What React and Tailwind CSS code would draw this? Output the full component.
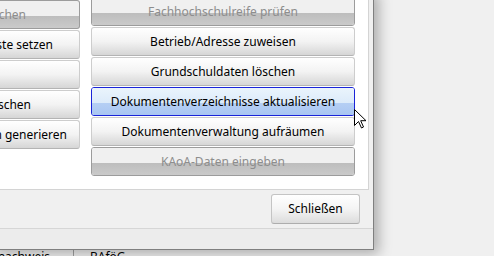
import React from "react";

const leftButtons = [
  { label: "chen", pad: "pr-[53px]", disabled: true },
  { label: "ste setzen", pad: "pr-[26px]" },
  { label: "", pad: "pr-[20px]" },
  { label: "schen", pad: "pr-[48px]" },
  { label: "n generieren", pad: "pr-[12px]" },
];

const rightButtons = [
  { label: "Fachhochschulreife prüfen", disabled: true },
  { label: "Betrieb/Adresse zuweisen" },
  { label: "Grundschuldaten löschen" },
  { label: "Dokumentenverzeichnisse aktualisieren", hot: true },
  { label: "Dokumentenverwaltung aufräumen" },
  { label: "KAoA-Daten eingeben", disabled: true },
];

const WinButton = ({ label, disabled, hot, className = "" }) => {
  if (disabled) {
    return (
      <div
        className={`relative h-[29px] shrink-0 rounded-[3px] border border-[#9c9c9c] overflow-hidden flex flex-col ${className}`}
      >
        <div className="h-[15px] bg-[#f0f0f0]" />
        <div className="flex-1 bg-gradient-to-b from-[#bdbdbd] to-[#cacaca]" />
        <span className="absolute inset-0 flex items-center justify-center text-[#8d8d8d] whitespace-nowrap">
          {label}
        </span>
      </div>
    );
  }
  if (hot) {
    return (
      <div
        className={`relative h-[29px] shrink-0 rounded-[3px] border border-[#1a24d8] overflow-hidden flex flex-col ${className}`}
      >
        <div className="h-[15px] bg-gradient-to-b from-[#eaf4fc] to-[#dcebfa]" />
        <div className="flex-1 bg-gradient-to-b from-[#b5cff4] to-[#a9c6f2]" />
        <span className="absolute inset-0 flex items-center justify-center text-black whitespace-nowrap">
          {label}
        </span>
      </div>
    );
  }
  return (
    <div
      className={`h-[29px] shrink-0 rounded-[3px] border border-[#cdcdcd] border-b-[#b4b4b4] bg-gradient-to-b from-[#ffffff] via-[#f3f3f3] to-[#d6d6d6] flex items-center justify-center text-black whitespace-nowrap overflow-hidden ${className}`}
    >
      {label}
    </div>
  );
};

export default function App() {
  return (
    <div
      className="relative w-[494px] h-[256px] overflow-hidden bg-[#f0f0f0] text-[12px]"
      style={{ fontFamily: '"Noto Sans", "Open Sans", sans-serif' }}
    >
      {/* Fenster dahinter */}
      <div className="absolute left-0 top-[248px] w-[494px] h-[20px] flex items-start text-black">
        <div className="w-[73px] flex justify-end pr-[23px] overflow-hidden whitespace-nowrap">
          <span>nachweis</span>
        </div>
        <div className="w-px h-[20px] bg-[#a0a0a0]" />
        <span className="pl-[16px]">BAföG</span>
      </div>

      {/* Dialog */}
      <div className="absolute left-[-10px] top-[-10px] w-[384px] h-[260px] bg-[#f0f0f0] border-r border-b border-[#7f7f7f] shadow-[5px_4px_12px_rgba(0,0,0,0.28)] flex flex-col">
        <div className="h-[200px] w-[379px] bg-white border-r border-b border-[#d4d4d4] flex gap-[11px] pt-[7px]">
          <div className="w-[90px] flex flex-col gap-[1px]">
            {leftButtons.map((b, i) => (
              <div
                key={i}
                className={`h-[29px] shrink-0 rounded-r-[3px] border border-l-0 flex items-center justify-end overflow-hidden whitespace-nowrap ${b.pad} ${
                  b.disabled
                    ? "border-[#9c9c9c] bg-[linear-gradient(to_bottom,#f0f0f0_0,#f0f0f0_15px,#bdbdbd_15px,#cacaca_100%)] text-[#8d8d8d]"
                    : "border-[#cdcdcd] border-b-[#b4b4b4] bg-gradient-to-b from-[#ffffff] via-[#f3f3f3] to-[#d6d6d6] text-black"
                } ${i === 0 ? "mt-[3px] h-[26px]" : ""}`}
              >
                {b.label}
              </div>
            ))}
          </div>
          <div className="w-[264px] flex flex-col gap-[1px]">
            {rightButtons.map((b, i) => (
              <WinButton key={i} {...b} />
            ))}
          </div>
        </div>

        <div className="h-[39px] flex items-center justify-end pr-[13px] border-b border-[#d6d6d6]">
          <div className="w-[89px] h-[30px] rounded-[3px] border border-[#c4c4c4] border-b-[#adadad] bg-gradient-to-b from-[#ffffff] via-[#f4f4f4] to-[#dcdcdc] flex items-center justify-center text-black">
            Schließen
          </div>
        </div>
        <div className="flex-1 bg-[#ececec]" />
      </div>

      {/* Mauszeiger */}
      <svg
        className="absolute left-[354px] top-[109px]"
        width="13"
        height="20"
        viewBox="0 0 13 20"
      >
        <path
          d="M0.5 0.5 L0.5 16.5 L4.5 12.5 L7.5 19 L9.5 18 L6.7 11.7 L12 11.7 Z"
          fill="#ffffff"
          stroke="#000000"
          strokeWidth="1"
          strokeLinejoin="miter"
        />
      </svg>
    </div>
  );
}
